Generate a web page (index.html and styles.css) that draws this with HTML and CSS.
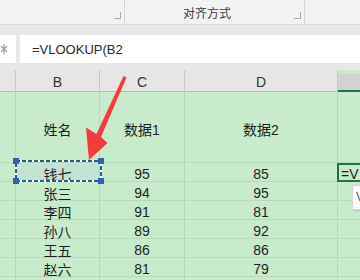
FILE: index.html
```html
<!DOCTYPE html>
<html lang="zh-CN">
<head>
    <meta charset="UTF-8">
    <title>VLOOKUP</title>
    <link rel="stylesheet" href="styles.css">
</head>
<body>
    <div class="app">
        <div class="ribbon">
            <div class="group group-left">
                <span class="launcher"></span>
            </div>
            <div class="group group-align">
                <span class="group-label">对齐方式</span>
                <span class="launcher"></span>
            </div>
        </div>
        <div class="band"></div>

        <div class="formula-bar">
            <div class="name-box">
                <svg class="fx" width="8" height="10" viewBox="0 0 8 10">
                    <path d="M0 2 L6 8 M6 2 L0 8 M3 0 V10" stroke="#9a9a9a" stroke-width="1.2" fill="none"/>
                </svg>
            </div>
            <div class="formula-input">=VLOOKUP(B2</div>
        </div>
        <div class="band small"></div>

        <div class="sheet">
            <div class="col-head"></div>
            <div class="col-head">B</div>
            <div class="col-head">C</div>
            <div class="col-head">D</div>
            <div class="col-head active"></div>

            <div class="cell"></div>
            <div class="cell">姓名</div>
            <div class="cell">数据1</div>
            <div class="cell">数据2</div>
            <div class="cell"></div>

            <div class="cell"></div>
            <div class="cell copied">钱七</div>
            <div class="cell">95</div>
            <div class="cell">85</div>
            <div class="cell editing">=V</div>

            <div class="cell"></div>
            <div class="cell">张三</div>
            <div class="cell">94</div>
            <div class="cell">95</div>
            <div class="cell"></div>

            <div class="cell"></div>
            <div class="cell">李四</div>
            <div class="cell">91</div>
            <div class="cell">81</div>
            <div class="cell"></div>

            <div class="cell"></div>
            <div class="cell">孙八</div>
            <div class="cell">89</div>
            <div class="cell">92</div>
            <div class="cell"></div>

            <div class="cell"></div>
            <div class="cell">王五</div>
            <div class="cell">86</div>
            <div class="cell">86</div>
            <div class="cell"></div>

            <div class="cell"></div>
            <div class="cell">赵六</div>
            <div class="cell">81</div>
            <div class="cell">79</div>
            <div class="cell"></div>

            <div class="cell"></div>
            <div class="cell"></div>
            <div class="cell"></div>
            <div class="cell"></div>
            <div class="cell"></div>
        </div>

        <!-- marching ants round the copied cell -->
        <div class="marquee">
            <svg width="91" height="26" viewBox="0 0 91 26">
                <rect x="3" y="3" width="85" height="20" fill="none" stroke="#ffffff" stroke-width="2"/>
                <rect x="3" y="3" width="85" height="20" fill="none" stroke="#2d5f7c" stroke-width="2" stroke-dasharray="4 2"/>
                <rect x="0" y="0" width="6" height="6" fill="#2f62b0"/>
                <rect x="85" y="0" width="6" height="6" fill="#2f62b0"/>
                <rect x="0" y="20" width="6" height="6" fill="#2f62b0"/>
                <rect x="85" y="20" width="6" height="6" fill="#2f62b0"/>
            </svg>
        </div>

        <div class="tip">V</div>

        <svg class="arrow" width="360" height="280" viewBox="0 0 360 280">
            <polygon points="123.5,76 126.5,77.5 101,137 107.5,143 89,160 86,127.5 96.5,134" fill="#f23b3b"/>
        </svg>
    </div>
</body>
</html>
```

FILE: styles.css
```css
* {
    margin: 0;
    padding: 0;
    box-sizing: border-box;
}

body {
    width: 360px;
    height: 280px;
    overflow: hidden;
    font-family: 'Liberation Sans', 'Noto Sans CJK SC', sans-serif;
    color: #222;
    background: #c8ebcb;
}

.app {
    position: relative;
    width: 360px;
    height: 280px;
    overflow: hidden;
}

/* ribbon */
.ribbon {
    display: flex;
    height: 24px;
    background: #f3f3f3;
}

.group {
    position: relative;
    height: 24px;
    border-right: 1px solid #d4d4d4;
}

.group-left {
    width: 125px;
}

.group-align {
    width: 180px;
    padding-left: 58px;
}

.group-label {
    display: block;
    font-size: 12px;
    line-height: 28px;
    color: #3c3c3c;
}

.launcher {
    position: absolute;
    right: 3px;
    top: 12px;
    width: 7px;
    height: 7px;
    border-right: 1px solid #a8a8a8;
    border-bottom: 1px solid #a8a8a8;
}

.band {
    height: 11px;
    background: #e8e8e8;
    border-top: 1px solid #dcdcdc;
}

.band.small {
    height: 7px;
    border-top: none;
}

/* formula bar */
.formula-bar {
    display: flex;
    gap: 4px;
    height: 28px;
    background: #e8e8e8;
}

.name-box {
    display: flex;
    align-items: center;
    width: 16px;
    background: #fff;
}

.fx {
    display: block;
    margin-left: 1px;
}

.formula-input {
    flex: 1;
    background: #fff;
    padding-left: 12px;
    font-size: 13px;
    line-height: 30px;
    color: #2a2a2a;
}

/* sheet grid */
.sheet {
    display: grid;
    grid-template-columns: 16px 84px 85px 153px 40px;
    grid-template-rows: 22px 71px repeat(7, 19px);
}

.col-head {
    background: #e6e6e6;
    border-right: 1px solid #cacaca;
    border-bottom: 1px solid #b8b8b8;
    text-align: center;
    font-size: 14px;
    line-height: 24px;
    color: #333;
}

.col-head.active {
    margin-top: 4px;
    background: #d2d2d2;
    border-bottom: 2px solid #217346;
}

.cell {
    border-right: 1px solid #b5d9ba;
    border-bottom: 1px solid #b5d9ba;
    display: flex;
    align-items: center;
    justify-content: center;
    font-size: 14px;
    padding-top: 3px;
    color: #1e1e1e;
}

.cell.copied {
    background: #c2e3d3;
}

.cell.editing {
    justify-content: flex-start;
    padding-left: 2px;
    border: 2px solid #217346;
    margin-left: -1px;
}

/* overlays */
.marquee {
    position: absolute;
    left: 13px;
    top: 158px;
    width: 91px;
    height: 26px;
}

.marquee svg {
    display: block;
}

.tip {
    position: absolute;
    left: 352px;
    top: 185px;
    width: 30px;
    height: 25px;
    background: #fff;
    border: 1px solid #d6d6d6;
    box-shadow: 1px 1px 2px rgba(0,0,0,0.15);
    padding-left: 3px;
    font-size: 12px;
    line-height: 22px;
    color: #555;
}

.arrow {
    position: absolute;
    left: 0;
    top: 0;
}
```
